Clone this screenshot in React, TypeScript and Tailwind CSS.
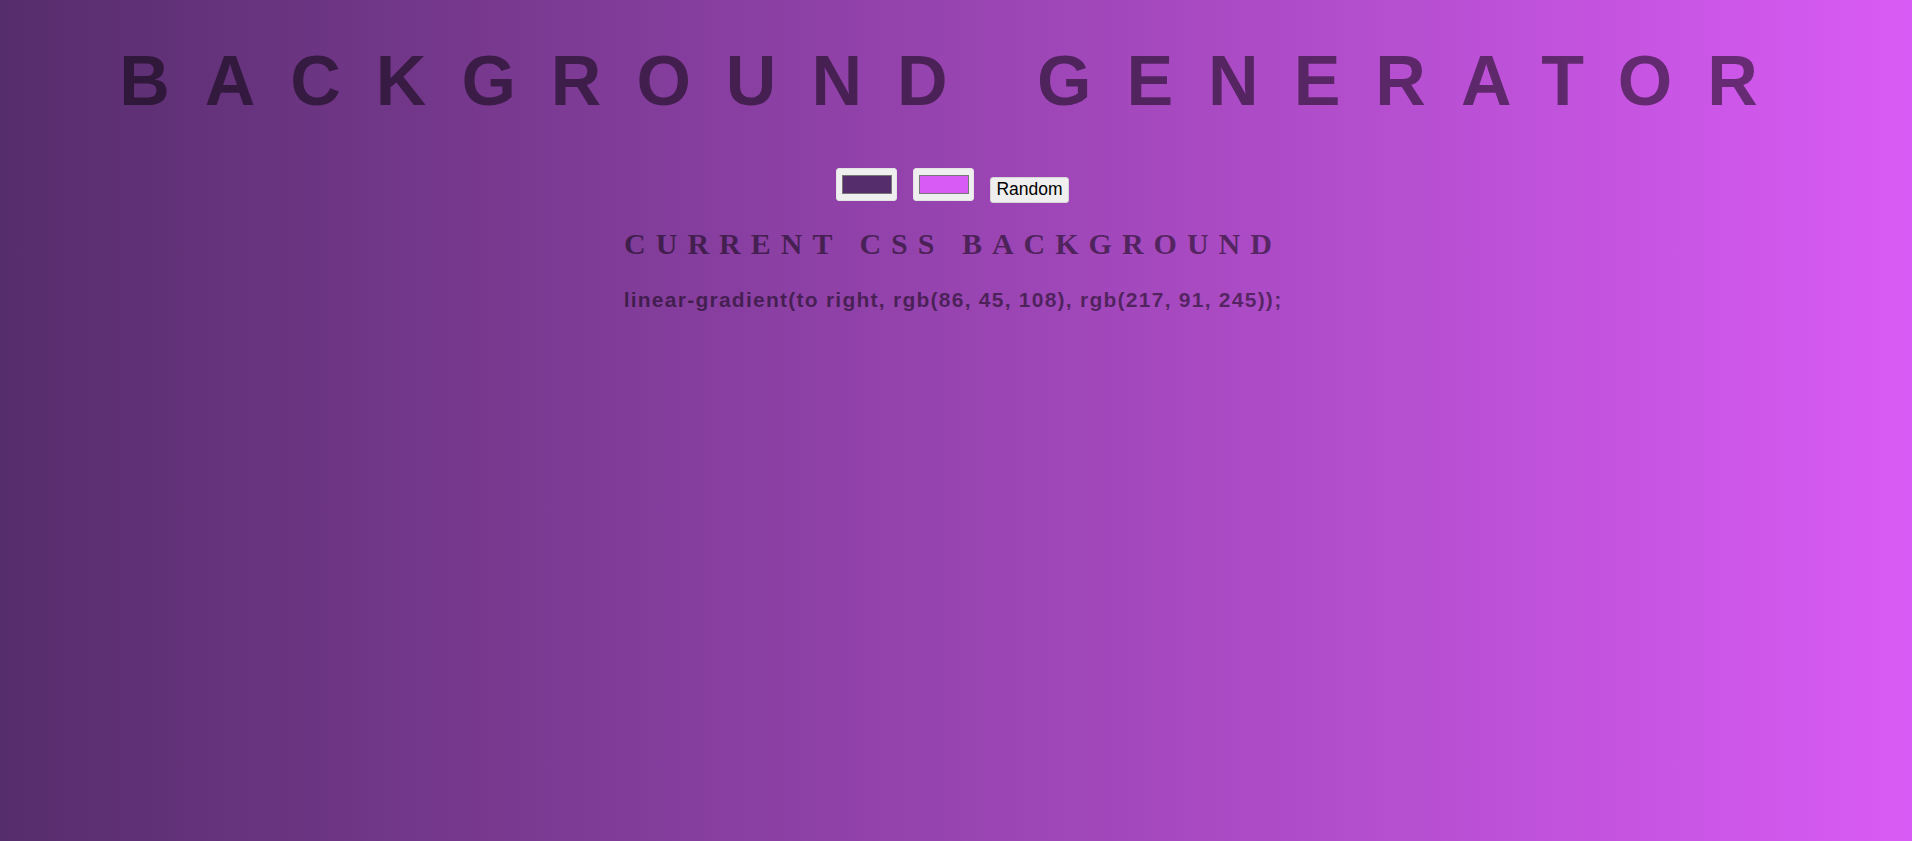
import { useState } from "react";

const toHex = (n: number) => n.toString(16).padStart(2, "0");
const rgbToHex = (c: number[]) => "#" + c.map(toHex).join("");
const hexToRgb = (h: string) => [1, 3, 5].map((i) => parseInt(h.slice(i, i + 2), 16));
const randomColor = () => [0, 0, 0].map(() => Math.floor(Math.random() * 256));

function ColorPicker({ color, onChange }: { color: number[]; onChange: (c: number[]) => void }) {
  return (
    <label className="relative flex h-[33px] w-[61px] cursor-pointer items-center justify-center rounded-[3px] border border-[#e4e4e4] bg-[#efefef]">
      <span
        className="block h-[19px] w-[50px] border border-[#777777]"
        style={{ backgroundColor: rgbToHex(color) }}
      />
      <input
        type="color"
        value={rgbToHex(color)}
        onChange={(e) => onChange(hexToRgb(e.target.value))}
        className="sr-only"
      />
    </label>
  );
}

export default function App() {
  const [left, setLeft] = useState([86, 45, 108]);
  const [right, setRight] = useState([217, 91, 245]);

  const css = `linear-gradient(to right, rgb(${left.join(", ")}), rgb(${right.join(", ")}))`;

  return (
    <div
      className="flex min-h-screen flex-col items-center text-center text-black/50"
      style={{ background: css }}
    >
      {/* Title */}
      <h1 className="mt-[41px] w-full font-['Liberation_Sans',Arial,sans-serif] text-[70px] leading-[80px] font-bold tracking-[35px] uppercase">
        Background Generator
      </h1>

      {/* Controls */}
      <div className="mt-[47px] flex items-start gap-[16px] pr-[7px]">
        <ColorPicker color={left} onChange={setLeft} />
        <ColorPicker color={right} onChange={setRight} />
        <button
          onClick={() => {
            setLeft(randomColor());
            setRight(randomColor());
          }}
          className="mt-[9px] h-[26px] w-[79px] rounded-[3px] border border-[#d6d6d6] bg-[#efefef] font-['Liberation_Sans',Arial,sans-serif] text-[17.5px] leading-none text-black"
        >
          Random
        </button>
      </div>

      {/* Current value */}
      <h2 className="mt-[24px] w-full pr-[6px] font-['Liberation_Serif','Times_New_Roman',serif] text-[30px] leading-[33px] font-bold tracking-[10px] uppercase">
        Current CSS Background
      </h2>
      <h3 className="mt-[28px] pr-[6px] font-['Liberation_Sans',Arial,sans-serif] text-[21px] leading-[24px] font-bold tracking-[1.25px]">
        {css};
      </h3>
    </div>
  );
}
